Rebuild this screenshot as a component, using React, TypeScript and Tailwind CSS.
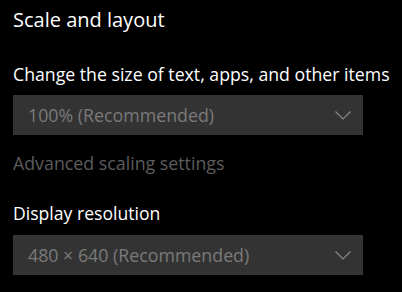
function Dropdown({ value }: { value: string }) {
  return (
    <div className="flex h-[40px] w-[350px] items-center justify-between bg-[#333333] pl-[15px] pr-[12px]">
      <span className="text-[17.8px] text-[#7a7a7a]">{value}</span>
      <svg width="16" height="9" viewBox="0 0 16 9" fill="none">
        <path d="M0.5 0.5 L8 8 L15.5 0.5" stroke="#8a8a8a" strokeWidth="1.2" />
      </svg>
    </div>
  );
}

export default function App() {
  return (
    <div
      className="h-[292px] w-[402px] overflow-hidden bg-black pl-[13px] pt-[3px] text-white"
      style={{ fontFamily: '"Open Sans", "Noto Sans", sans-serif' }}
    >
      <h1 className="text-[20px] leading-[34px]">Scale and layout</h1>
      <p className="mt-[25px] text-[17.7px] leading-[24px]">Change the size of text, apps, and other items</p>
      <div className="mt-[9px]">
        <Dropdown value="100% (Recommended)" />
      </div>
      <p className="mt-[16px] text-[17.8px] leading-[24px] text-[#5c5c5c]">Advanced scaling settings</p>
      <p className="mt-[26px] text-[17.6px] leading-[24px]">Display resolution</p>
      <div className="mt-[10px]">
        <Dropdown value="480 × 640 (Recommended)" />
      </div>
    </div>
  );
}
